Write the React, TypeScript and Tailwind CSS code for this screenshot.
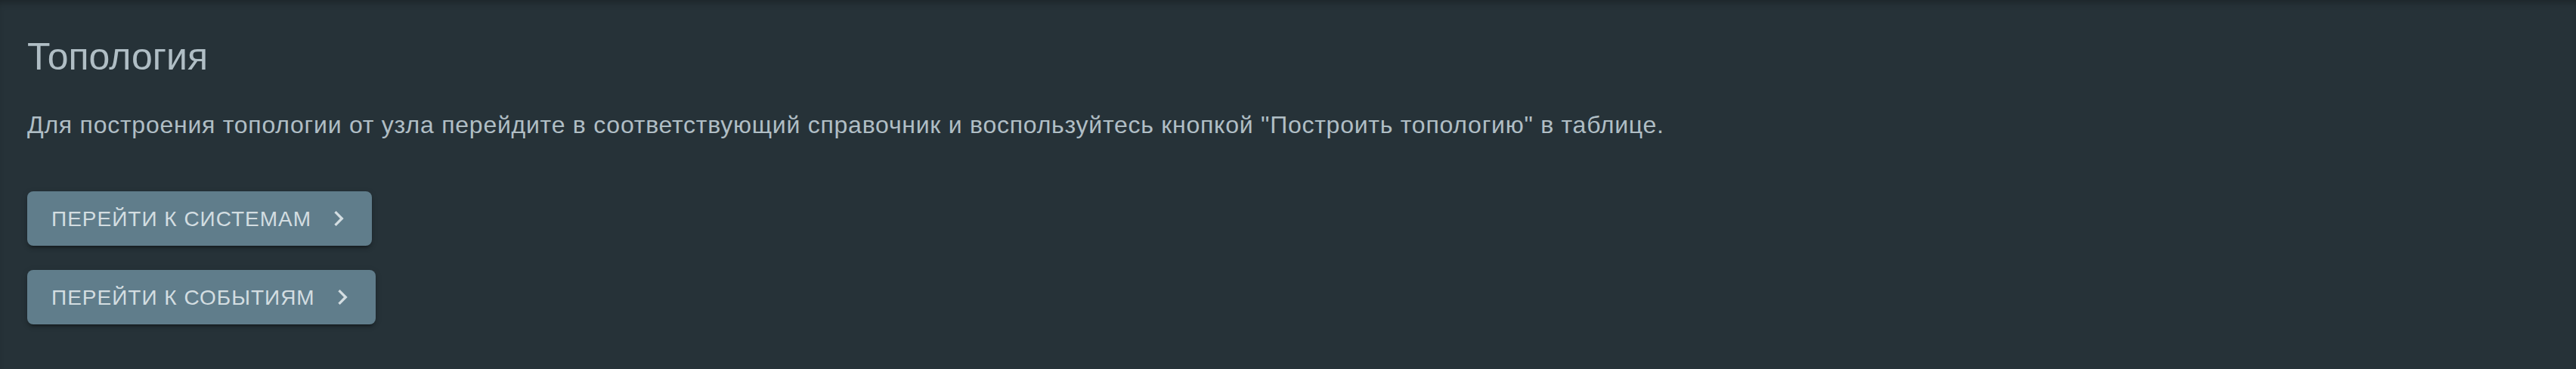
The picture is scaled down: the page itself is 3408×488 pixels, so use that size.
import React from 'react';

function ChevronRight() {
  return (
    <svg viewBox="0 0 24 24" className="h-10 w-10 fill-current" aria-hidden="true">
      <path d="M10 6 8.59 7.41 13.17 12l-4.58 4.59L10 18l6-6z" />
    </svg>
  );
}

function NavButton({ label }: { label: string }) {
  return (
    <button
      type="button"
      className="flex items-center h-[72px] w-fit pl-[32px] pr-[32px] rounded-[8px] bg-[#607d8b] text-[#d3dde1] text-[28px] leading-[49px] tracking-[1px] uppercase shadow-[0_6px_2px_-4px_rgba(0,0,0,0.2),0_4px_4px_0_rgba(0,0,0,0.14),0_2px_10px_0_rgba(0,0,0,0.12)]"
    >
      <span>{label}</span>
      <span className="ml-[16px] -mr-[8px] flex">
        <ChevronRight />
      </span>
    </button>
  );
}

export default function App() {
  return (
    <div
      className="min-h-screen bg-[#263238] px-[36px] pt-[43px] shadow-[inset_0_8px_8px_-4px_rgba(0,0,0,0.25)]"
      style={{ fontFamily: '"Liberation Sans", Arial, sans-serif' }}
    >
      {/* Header */}
      <h1 className="text-[50px] leading-[64px] font-normal text-[#b0bec5]">Топология</h1>
      <p className="mt-[34px] text-[32px] leading-[48px] tracking-[0.75px] text-[#b0bec5]">
        Для построения топологии от узла перейдите в соответствующий справочник и воспользуйтесь кнопкой "Построить топологию" в таблице.
      </p>

      {/* Actions */}
      <div className="mt-[64px] flex flex-col gap-[32px]">
        <NavButton label="Перейти к системам" />
        <NavButton label="Перейти к событиям" />
      </div>
    </div>
  );
}
